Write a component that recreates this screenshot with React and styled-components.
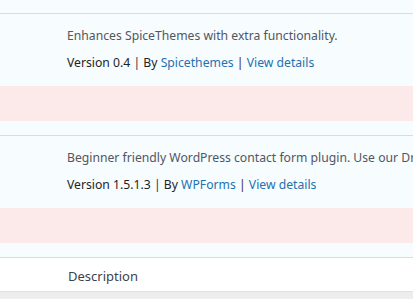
import styled, { createGlobalStyle } from "styled-components";

const GlobalStyle = createGlobalStyle`
	html, body {
		margin: 0;
		padding: 0;
		background: #f7fcfe;
	}
	body {
		font-family: "Noto Sans", "Open Sans", sans-serif;
		font-size: 12.2px;
		color: #3c434a;
	}
`;

// plugins with a pending update notice
const plugins = [
	{
		desc: "Enhances SpiceThemes with extra functionality.",
		version: "0.4",
		author: "Spicethemes",
	},
	{
		desc: "Beginner friendly WordPress contact form plugin. Use our Drag & Drop form builder to create your WordPress forms.",
		version: "1.5.1.3",
		author: "WPForms",
	},
];

const Page = styled.div`
	width: 413px;
	height: 299px;
	overflow: hidden;
	padding-top: 13px;
	box-sizing: border-box;
`;

const PluginBlock = styled.div`
	border-top: 1px solid #dcdcde;
	background: #f7fcfe;
`;

const Info = styled.div`
	padding: 13px 0 0 67px;
	height: 72px;
	box-sizing: border-box;
	white-space: nowrap;
	overflow: hidden;
`;

const Desc = styled.p`
	margin: 0;
	line-height: 18px;
	color: #50575e;
`;

const Meta = styled.p`
	margin: 9px 0 0;
	line-height: 18px;
	color: #1d2327;
`;

const Link = styled.a`
	color: #2271b1;
	text-decoration: none;
`;

const Sep = styled.span`
	color: #3c2a3a;
`;

const UpdateRow = styled.div`
	height: 35px;
	background: #fce9ea;
	margin-bottom: 14px;
`;

const Footer = styled.div`
	border-top: 1px solid #dcdcde;
	background: #fff;
	height: 35px;
	box-sizing: border-box;
	display: flex;
	align-items: center;
	padding: 3px 0 0 68px;
	color: #3c434a;
	font-size: 13px;
	border-bottom: 1px solid #e2e2e4;
`;

const Shade = styled.div`
	height: 10px;
	background: linear-gradient(#ececed, #f0f0f1);
`;

const Plugin = ({ p }) => (
	<PluginBlock>
		<Info>
			<Desc>{p.desc}</Desc>
			<Meta>
				Version {p.version} <Sep>|</Sep> By <Link href='#'>{p.author}</Link>{" "}
				<Sep>|</Sep> <Link href='#'>View details</Link>
			</Meta>
		</Info>
		<UpdateRow />
	</PluginBlock>
);

export default function App() {
	return (
		<Page>
			<GlobalStyle />
			{plugins.map((p) => (
				<Plugin key={p.author} p={p} />
			))}
			<Footer>Description</Footer>
			<Shade />
		</Page>
	);
}
